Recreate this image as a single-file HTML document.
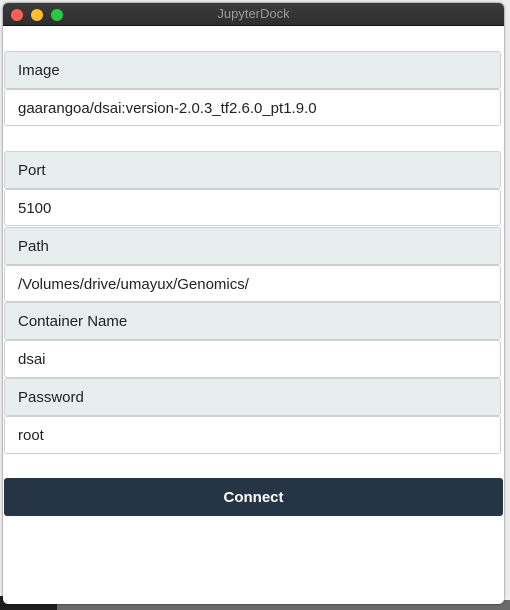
<!DOCTYPE html>
<html><head><style>
body{margin:0;width:510px;height:610px;background:#ececec;position:relative;overflow:hidden;font-family:"Liberation Sans",sans-serif}
.bot{position:absolute;left:0;top:600px;width:510px;height:10px;background:#6a6a6a}
.bot2{position:absolute;left:0;top:596px;width:57px;height:14px;background:#1e1e1e}
.win{position:absolute;left:3px;top:3px;width:501px;height:601px;background:#fff;border-radius:5px;overflow:hidden;box-shadow:0 0 2px rgba(0,0,0,.6)}
.tb{height:22px;background:linear-gradient(#3c3c3c,#2e2e2e);border-bottom:1px solid #111;color:#9a9a9a;font-size:13px;text-align:center;line-height:22px}
.d{position:absolute;top:6px;width:12px;height:12px;border-radius:50%}
.f{position:absolute;left:1px;width:497px;box-sizing:border-box;border:1px solid #ccd0d3;border-radius:3px;font-size:15px;color:#222;padding-left:13px;padding-top:2px}
.l{background:#e8eded}
.i{background:#fff}
.btn{position:absolute;left:1px;top:475px;width:499px;height:38px;background:#263545;border-radius:3px;color:#fff;font-size:15px;font-weight:bold;text-align:center;line-height:40px}
</style></head><body>
<div class="bot"></div><div class="bot2"></div>
<div class="win">
<div class="tb">JupyterDock</div>
<div class="d" style="left:8px;background:#fe5f57"></div>
<div class="d" style="left:28px;background:#febc2e"></div>
<div class="d" style="left:48px;background:#28c840"></div>
<div class="f l" style="top:48px;height:38px;line-height:34px">Image</div>
<div class="f i" style="top:86px;height:37px;line-height:33px">gaarangoa/dsai:version-2.0.3_tf2.6.0_pt1.9.0</div>
<div class="f l" style="top:148px;height:38px;line-height:34px">Port</div>
<div class="f i" style="top:186px;height:37px;line-height:33px">5100</div>
<div class="f l" style="top:224px;height:38px;line-height:34px">Path</div>
<div class="f i" style="top:262px;height:37px;line-height:33px">/Volumes/drive/umayux/Genomics/</div>
<div class="f l" style="top:299px;height:38px;line-height:34px">Container Name</div>
<div class="f i" style="top:337px;height:38px;line-height:34px">dsai</div>
<div class="f l" style="top:375px;height:38px;line-height:34px">Password</div>
<div class="f i" style="top:413px;height:38px;line-height:34px">root</div>
<div class="btn">Connect</div>
</div>
</body></html>
